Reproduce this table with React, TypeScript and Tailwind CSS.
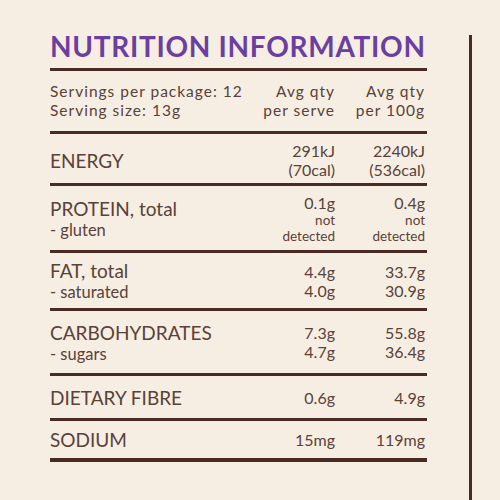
const font = { fontFamily: 'Lato, "Noto Sans", sans-serif' }

type Row = {
  label: string
  sub?: string
  a: string[]
  b: string[]
  h: string
}

function Values({ lines, small }: { lines: string[]; small?: boolean }) {
  return (
    <div className="flex flex-col items-end">
      {lines.map((l, i) => (
        <div key={i} className={i > 0 && small ? 'text-[13.5px] leading-[16px]' : 'text-[16px] leading-[19px]'}>
          {l}
        </div>
      ))}
    </div>
  )
}

function NutrientRow({ label, sub, a, b, h }: Row) {
  const small = a.length > 2
  return (
    <div className={`grid grid-cols-[1fr_90px_92px] items-center border-b-[3px] border-[#4a2b23] ${h}`}>
      <div>
        <div className="text-[19px] leading-[23px]">{label}</div>
        {sub && <div className="text-[16.5px] leading-[20px]">{sub}</div>}
      </div>
      <Values lines={a} small={small} />
      <div className="pr-[2px]">
        <Values lines={b} small={small} />
      </div>
    </div>
  )
}

const rows: Row[] = [
  { label: 'ENERGY', a: ['291kJ', '(70cal)'], b: ['2240kJ', '(536cal)'], h: 'h-[52px] pt-[3px]' },
  { label: 'PROTEIN, total', sub: '- gluten', a: ['0.1g', 'not', 'detected'], b: ['0.4g', 'not', 'detected'], h: 'h-[67px]' },
  { label: 'FAT, total', sub: '- saturated', a: ['4.4g', '4.0g'], b: ['33.7g', '30.9g'], h: 'h-[58px]' },
  { label: 'CARBOHYDRATES', sub: '- sugars', a: ['7.3g', '4.7g'], b: ['55.8g', '36.4g'], h: 'h-[65px]' },
  { label: 'DIETARY FIBRE', a: ['0.6g'], b: ['4.9g'], h: 'h-[45px]' },
]

export default function App() {
  return (
    <div className="flex h-[500px] w-[500px] overflow-hidden bg-[#f6eee2] text-[#5a4139]" style={font}>
      <div className="ml-[50px] w-[377px]">
        <div className="h-[71px] border-b-[3px] border-[#4a2b23] pt-[29px]">
          <div className="text-[28px] font-bold leading-[34px] tracking-[0.7px] text-[#6b3fa0]">
            NUTRITION INFORMATION
          </div>
        </div>
        <div className="grid h-[63px] grid-cols-[1fr_80px_92px] items-center whitespace-nowrap border-b-[3px] border-[#4a2b23] text-[15.5px] leading-[19px] tracking-[1px]">
          <div>
            <div>Servings per package: 12</div>
            <div>Serving size: 13g</div>
          </div>
          <div className="text-right">
            <div>Avg qty</div>
            <div>per serve</div>
          </div>
          <div className="pr-[2px] text-right">
            <div>Avg qty</div>
            <div>per 100g</div>
          </div>
        </div>
        {rows.map((r) => (
          <NutrientRow key={r.label} {...r} />
        ))}
        <div className="grid h-[41px] grid-cols-[1fr_90px_92px] items-center border-b-4 border-[#4a2b23]">
          <div className="text-[19px] leading-[23px]">SODIUM</div>
          <Values lines={['15mg']} />
          <div className="pr-[2px]">
            <Values lines={['119mg']} />
          </div>
        </div>
      </div>
      <div className="ml-[42px] mt-[35px] w-[3px] bg-[#4a2b23]" />
    </div>
  )
}
